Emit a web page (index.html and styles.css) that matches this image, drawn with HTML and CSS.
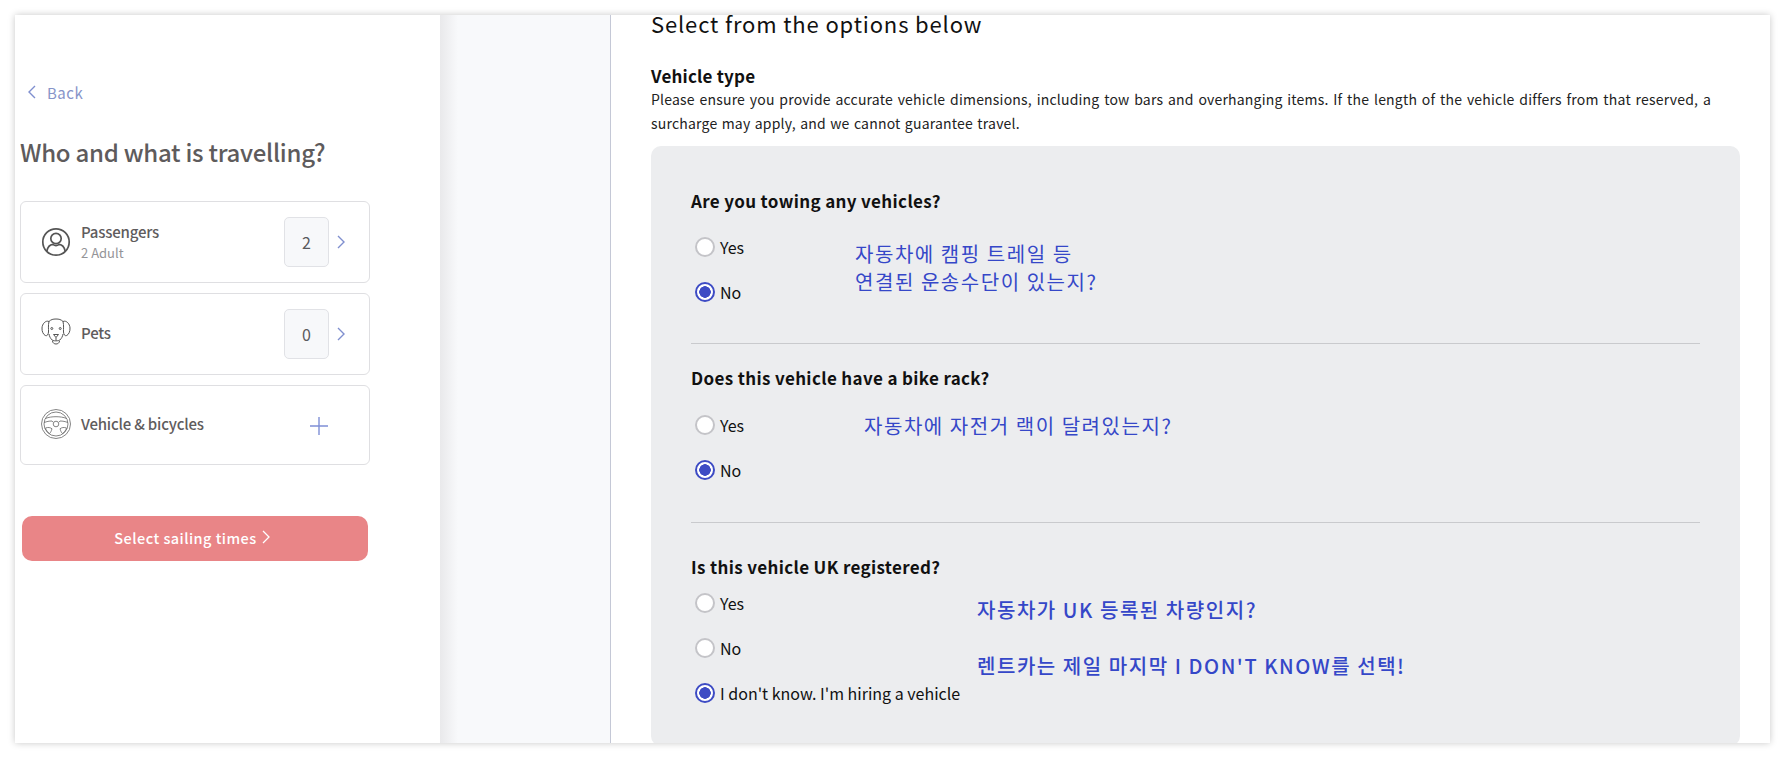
FILE: index.html
```html
<!DOCTYPE html>
<html lang="en">
<head>
    <meta charset="UTF-8">
    <meta name="viewport" content="width=device-width, initial-scale=1.0">
    <title>Who and what is travelling?</title>
    <link rel="stylesheet" href="styles.css">
</head>
<body>
    <div class="frame">
        <aside class="sidebar">
            <a class="back-link" href="#">
                <svg width="10" height="16" viewBox="0 0 10 16"><path d="M8 2 2 8l6 6" fill="none" stroke="#7f8fcf" stroke-width="1.4"/></svg>
                Back
            </a>
            <h1>Who and what is travelling?</h1>

            <div class="card">
                <svg class="card-icon" width="30" height="30" viewBox="0 0 30 30" fill="none" stroke="#555" stroke-width="1.7">
                    <circle cx="15" cy="15" r="13.2"/>
                    <circle cx="15" cy="11.5" r="5.2"/>
                    <path d="M5.800 24.200c1-4.400 3.800-6.600 6-6.800 2 1.400 4.400 1.400 6.400 0 2.200.2 5 2.400 6 6.800"/>
                </svg>
                <div class="card-text">
                    <div class="card-title">Passengers</div>
                    <div class="card-sub">2 Adult</div>
                </div>
                <div class="count">2</div>
                <svg class="chevron" width="10" height="16" viewBox="0 0 10 16"><path d="M2 2l6 6-6 6" fill="none" stroke="#7f8fcf" stroke-width="1.4"/></svg>
            </div>

            <div class="card card-raised">
                <svg class="card-icon" width="30" height="28" viewBox="0 0 30 28" fill="none" stroke="#555" stroke-width="1">
                    <path d="M8 3.500C10 1.500 12 1 15 1s5 .5 7 2.500"/>
                    <path d="M8 3.500C4.500 2 1.200 6 1 10c-.2 3.500 1.300 6.500 3.300 7.500 2 .8 3-1 3.200-3.500.2-3-.5-6.500.5-10.500z"/>
                    <path d="M22 3.500c3.500-1.500 6.800 2.500 7 6.500.2 3.500-1.300 6.500-3.300 7.500-2 .8-3-1-3.200-3.500-.2-3 .5-6.500-.5-10.500z"/>
                    <path d="M8 16c.4 2.500 1.500 4.500 3 5.800M22 16c-.4 2.500-1.500 4.500-3 5.800"/>
                    <path d="M12.500 16.500h5L15 19.500z"/>
                    <path d="M15 19.500v3M10.500 21.500c1 1.800 7.500 1.800 9 0M11.500 23c.3 4 6.700 4 7 0"/>
                    <circle cx="10.800" cy="10.500" r="1"/>
                    <circle cx="19.200" cy="10.500" r="1"/>
                </svg>
                <div class="card-text">
                    <div class="card-title">Pets</div>
                </div>
                <div class="count">0</div>
                <svg class="chevron" width="10" height="16" viewBox="0 0 10 16"><path d="M2 2l6 6-6 6" fill="none" stroke="#7f8fcf" stroke-width="1.4"/></svg>
            </div>

            <div class="card card-short">
                <svg class="card-icon" width="30" height="30" viewBox="0 0 30 30" fill="none" stroke="#666" stroke-width=".8">
                    <circle cx="15" cy="15" r="14.500"/>
                    <circle cx="15" cy="15" r="12"/>
                    <circle cx="15" cy="15" r="2.800"/>
                    <path d="M4.500 9.500c3-1.300 6.500-1.800 10.500-1.800s7.500.5 10.500 1.800"/>
                    <path d="M3.200 13.500c2.500-1 5-1.500 7.800-1.500l1 1.200M26.800 13.500c-2.500-1-5-1.500-7.800-1.500l-1 1.200"/>
                    <path d="M4.500 19c2.500-1 5-.5 6.500.8-.6 2.200-1.600 4-2.500 4.800-2-1.300-3.400-3.500-4-5.600z"/>
                    <path d="M25.500 19c-2.500-1-5-.5-6.500.8.600 2.200 1.600 4 2.500 4.800 2-1.300 3.400-3.500 4-5.600z"/>
                </svg>
                <div class="card-text">
                    <div class="card-title">Vehicle &amp; bicycles</div>
                </div>
                <svg class="plus" width="20" height="20" viewBox="0 0 20 20"><path d="M10 1v18M1 10h18" stroke="#7f8fd6" stroke-width="1.400"/></svg>
            </div>

            <button class="submit-btn">Select sailing times
                <svg width="10" height="14" viewBox="0 0 10 14"><path d="M2 1l6 6-6 6" fill="none" stroke="#fff" stroke-width="1.300"/></svg>
            </button>
        </aside>

        <div class="gutter"></div>

        <main class="content">
            <h2>Select from the options below</h2>
            <h3>Vehicle type</h3>
            <p class="intro">Please ensure you provide accurate vehicle dimensions, including tow bars and overhanging items. If the length of the vehicle differs from that reserved, a surcharge may apply, and we cannot guarantee travel.</p>

            <div class="panel">
                <section class="question q-tow">
                    <div class="q-title">Are you towing any vehicles?</div>
                    <label class="option"><input type="radio" name="tow">Yes</label>
                    <label class="option"><input type="radio" name="tow" checked>No</label>
                    <div class="note note-tow">자동차에 캠핑 트레일 등<br>연결된 운송수단이 있는지?</div>
                </section>
                <section class="question q-rack">
                    <div class="q-title">Does this vehicle have a bike rack?</div>
                    <label class="option"><input type="radio" name="rack">Yes</label>
                    <label class="option"><input type="radio" name="rack" checked>No</label>
                    <div class="note note-rack">자동차에 자전거 랙이 달려있는지?</div>
                </section>
                <section class="question q-uk">
                    <div class="q-title">Is this vehicle UK registered?</div>
                    <label class="option"><input type="radio" name="uk">Yes</label>
                    <label class="option"><input type="radio" name="uk">No</label>
                    <label class="option"><input type="radio" name="uk" checked>I don't know. I'm hiring a vehicle</label>
                    <div class="note note-uk">자동차가 UK 등록된 차량인지?<br><br>렌트카는 제일 마지막 I DON'T KNOW를 선택!</div>
                </section>
            </div>
        </main>
    </div>
</body>
</html>
```

FILE: styles.css
```css
* {
    box-sizing: border-box;
}
body {
    margin: 0;
    height: 758px;
    padding: 15px;
    background: #fff;
    font-family: "Noto Sans CJK KR", "Noto Sans", sans-serif;
    overflow: hidden;
}
.frame {
    display: flex;
    width: 1755px;
    height: 728px;
    background: #fff;
    box-shadow: 0 0 7px rgba(0,0,0,0.22);
    overflow: hidden;
}

/* left column */
.sidebar {
    width: 425px;
    flex-shrink: 0;
    padding: 66px 70px 0 5px;
    background: #fff;
}
.back-link {
    display: flex;
    align-items: center;
    gap: 10px;
    height: 22px;
    margin-left: 7px;
    font-size: 15px;
    letter-spacing: 0.5px;
    color: #8794c9;
    text-decoration: none;
}
h1 {
    margin: 30px 0 0;
    font-size: 24px;
    line-height: 38px;
    font-weight: 500;
    letter-spacing: -0.27px;
    color: #5e5b5c;
}
.card {
    display: flex;
    align-items: center;
    height: 82px;
    margin-top: 10px;
    padding: 0 23px 0 20px;
    border: 1px solid #dfdfe2;
    border-radius: 6px;
    background: #fff;
}
h1 + .card {
    margin-top: 30px;
}
.card-short {
    height: 80px;
}
.card-icon {
    flex-shrink: 0;
    margin-right: 10px;
}
.card-raised .card-icon {
    margin-top: -5px;
}
.card-short .card-icon {
    margin-top: -3px;
}
.card-text {
    flex: 1;
}
.card-title {
    font-size: 15px;
    line-height: 20px;
    font-weight: 500;
    letter-spacing: -0.2px;
    color: #5f5c5d;
}
.card-raised .card-title {
    margin-top: -3px;
}
.card-short .card-title {
    margin-top: -2px;
}
.card-sub {
    font-size: 13px;
    line-height: 21px;
    color: #949498;
}
.count {
    display: flex;
    align-items: center;
    justify-content: center;
    width: 45px;
    height: 50px;
    border: 1px solid #e1e2e6;
    border-radius: 5px;
    background: #f7f8fa;
    font-size: 16px;
    color: #5a5a5e;
}
.chevron {
    margin-left: 7px;
}
.plus {
    margin: 1px 17px 0 0;
}
.submit-btn {
    display: flex;
    align-items: center;
    justify-content: center;
    gap: 4px;
    width: 346px;
    height: 45px;
    margin: 51px 0 0 2px;
    padding: 0 5px 3px 0;
    border: none;
    border-radius: 10px;
    background: #e98587;
    color: #fff;
    font-family: inherit;
    font-size: 14.500px;
    font-weight: 500;
    letter-spacing: 0.45px;
}

/* strip between the columns */
.gutter {
    width: 171px;
    flex-shrink: 0;
    border-right: 1px solid #c4c8d6;
    background: linear-gradient(to right, #e9e9eb, #f8f9fb 18px);
}

/* right column */
.content {
    flex: 1;
    padding: 0 30px 0 40px;
    color: #111;
}
h2 {
    margin: -2px 0 0;
    font-size: 22px;
    line-height: 20px;
    font-weight: 400;
    letter-spacing: 0.85px;
}
h3 {
    margin: 31px 0 0;
    font-size: 17px;
    line-height: 24px;
    font-weight: 700;
    letter-spacing: 0.2px;
}
.intro {
    width: 1060px;
    margin: 0;
    font-size: 14px;
    line-height: 23.500px;
    letter-spacing: 0.2px;
    word-spacing: 1px;
    color: #222;
    text-align: justify;
}
.panel {
    height: 600px;
    margin-top: 11px;
    padding: 0 40px;
    border-radius: 10px;
    background: #ecedef;
}
.question {
    position: relative;
    border-bottom: 1px solid #c9cacd;
}
.question:last-child {
    border-bottom: none;
}
.q-tow {
    height: 198px;
    padding-top: 42px;
}
.q-rack {
    height: 179px;
    padding-top: 21px;
}
.q-uk {
    padding-top: 31px;
}
.q-title {
    font-size: 17px;
    line-height: 26px;
    font-weight: 700;
    letter-spacing: 0.35px;
    color: #111;
}
.option {
    display: flex;
    align-items: center;
    gap: 5px;
    height: 45px;
    padding-left: 4px;
    font-size: 16px;
    color: #111;
}
.q-title + .option {
    margin-top: 10px;
}
.q-rack .q-title + .option {
    margin-top: 11px;
}
.q-uk .q-title + .option {
    margin-top: 0;
}
.option input {
    appearance: none;
    width: 20px;
    height: 20px;
    margin: 0;
    flex-shrink: 0;
    border: 2px solid #c4c4c8;
    border-radius: 50%;
    background: #fff;
}
.option input:checked {
    border-color: #3d4bc4;
    background: radial-gradient(circle, #3d4bc4 5.500px, #fff 6px);
}

/* hand-written notes laid over the form */
.note {
    position: absolute;
    font-size: 20px;
    line-height: 28px;
    letter-spacing: 1.550px;
    color: #3547c8;
    white-space: nowrap;
}
.note-tow {
    left: 164px;
    top: 94px;
}
.note-rack {
    left: 173px;
    top: 68px;
}
.note-uk {
    left: 286px;
    top: 73px;
    font-weight: 500;
}
```
